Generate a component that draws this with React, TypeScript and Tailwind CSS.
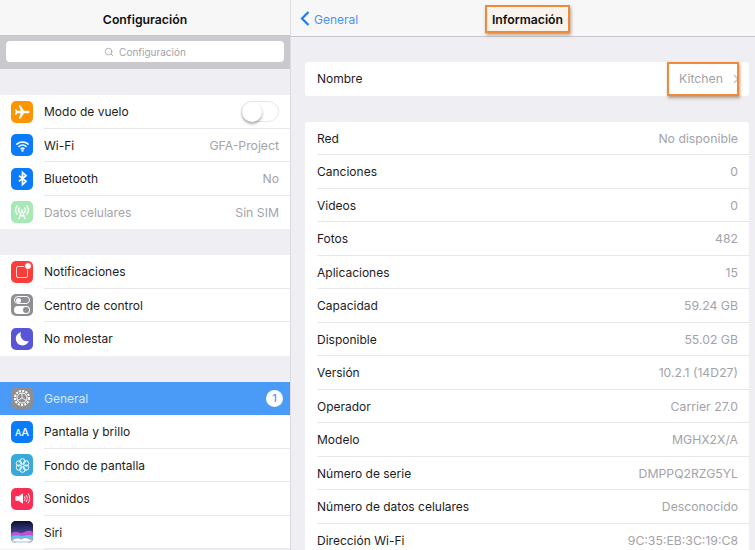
import type { ReactNode } from 'react'
import { Search } from 'lucide-react'

const font = { fontFamily: 'Inter, "Liberation Sans", sans-serif' }

function Tile({ bg, children }: { bg: string; children: ReactNode }) {
  return <div className={`flex h-[22px] w-[22px] shrink-0 items-center justify-center overflow-hidden rounded-[5px] ${bg}`}>{children}</div>
}

const Plane = () => (
  <svg viewBox="0 0 24 24" className="h-[18px] w-[18px]" fill="white">
    <path d="M22 12c0-1-1-1.600-2-1.600h-5.400L9.800 3H7.800l2.400 7.400H5.800L4 8H2.500l1 4-1 4H4l1.800-2.400h4.400L7.800 21h2l4.800-7.400H20c1 0 2-.6 2-1.600z" />
  </svg>
)
const Wifi = () => (
  <svg viewBox="0 0 24 24" className="h-[17px] w-[17px]" fill="none" stroke="white" strokeWidth="2.200" strokeLinecap="round">
    <path d="M4 10c4.600-4 11.400-4 16 0M7 13.300c3-2.500 7-2.500 10 0M10 16.400c1.200-.9 2.800-.9 4 0" />
    <circle cx="12" cy="19" r="0.6" fill="white" />
  </svg>
)
const Bluetooth = () => (
  <svg viewBox="0 0 24 24" className="h-[17px] w-[17px]" fill="none" stroke="white" strokeWidth="2.400">
    <path d="M7 8l10 8-5 4.500V3.500L17 8 7 16" />
  </svg>
)
const Antenna = () => (
  <svg viewBox="0 0 24 24" className="h-[18px] w-[18px]" fill="none" stroke="white" strokeWidth="1.800" strokeLinecap="round">
    <path d="M12 9L8 21M12 9l4 12M9.500 17h5M8.500 6.500a5 5 0 0 0 0 6M15.500 6.500a5 5 0 0 1 0 6M5.500 4a9 9 0 0 0 0 11M18.500 4a9 9 0 0 1 0 11" />
  </svg>
)
const Notif = () => (
  <div className="relative h-[22px] w-[22px]">
    <div className="absolute left-[5px] top-[5px] h-[12px] w-[12px] rounded-[2px] border-[1.500px] border-white/80" />
    <div className="absolute right-[1px] top-[1px] h-[8px] w-[8px] rounded-full border border-[#fc3d39] bg-white" />
  </div>
)
const Control = () => (
  <div className="flex flex-col gap-[2px]">
    <div className="flex h-[8px] w-[16px] items-center justify-start rounded-full border border-white pl-[1px]"><div className="h-[5px] w-[5px] rounded-full bg-white" /></div>
    <div className="flex h-[8px] w-[16px] items-center justify-end rounded-full bg-white pr-[1px]"><div className="h-[6px] w-[6px] rounded-full bg-[#8e8e93]" /></div>
  </div>
)
const Moon = () => (
  <svg viewBox="0 0 24 24" className="h-[17px] w-[17px]" fill="white">
    <path d="M10 3a9.500 9.500 0 1 0 11 12.500C14 17.500 7 11 10 3z" />
  </svg>
)
const Gear = () => (
  <svg viewBox="0 0 24 24" className="h-[20px] w-[20px]" fill="none" stroke="white">
    <circle cx="12" cy="12" r="8.500" strokeWidth="2.500" strokeDasharray="2.500 1.500" />
    <circle cx="12" cy="12" r="6" strokeWidth="1.200" />
    <path d="M12 6V12l5.200 3M12 12l-5.200 3" strokeWidth="1" />
  </svg>
)
const Flower = () => (
  <svg viewBox="0 0 24 24" className="h-[19px] w-[19px]" fill="none" stroke="white" strokeWidth="1.200">
    <circle cx="12" cy="6.800" r="3.400" />
    <circle cx="12" cy="17.200" r="3.400" />
    <circle cx="7.500" cy="9.400" r="3.400" />
    <circle cx="16.500" cy="9.400" r="3.400" />
    <circle cx="7.500" cy="14.600" r="3.400" />
    <circle cx="16.500" cy="14.600" r="3.400" />
  </svg>
)
const Speaker = () => (
  <svg viewBox="0 0 24 24" className="h-[17px] w-[17px]" fill="none" stroke="white" strokeWidth="1.300" strokeLinecap="round">
    <path d="M3 9.500h3.500L12 5.500v13l-5.500-4H3z" fill="white" />
    <path d="M15 9.500a4 4 0 0 1 0 5M17.500 7.500a7 7 0 0 1 0 9M20 5.500a10 10 0 0 1 0 13" />
  </svg>
)
const Siri = () => (
  <svg viewBox="0 0 22 22" className="h-[22px] w-[22px]">
    <defs>
      <linearGradient id="siri-bg" x1="0" y1="0" x2="0" y2="1">
        <stop offset="0" stopColor="#0d0f2b" />
        <stop offset="0.5" stopColor="#3a3f8f" />
        <stop offset="1" stopColor="#dff1fb" />
      </linearGradient>
    </defs>
    <rect width="22" height="22" fill="url(#siri-bg)" />
    <path d="M0 13c5-5 8 0 11-1s6-4 11-1v4H0z" fill="#c64fd0" />
    <path d="M0 16c4-3 8-1 11-1s7-2 11 0v2H0z" fill="#57c3f0" />
    <path d="M2 20c2-3 6-3 8-1 3-3 8-2 10 1z" fill="white" />
  </svg>
)

type SideRow = { icon: ReactNode; bg: string; label: string; value?: string; dim?: boolean; toggle?: boolean; active?: boolean; badge?: string }

const group1: SideRow[] = [
  { icon: <Plane />, bg: 'bg-[#fe9500]', label: 'Modo de vuelo', toggle: true },
  { icon: <Wifi />, bg: 'bg-[#0a7bfa]', label: 'Wi-Fi', value: 'GFA-Project' },
  { icon: <Bluetooth />, bg: 'bg-[#0a7bfa]', label: 'Bluetooth', value: 'No' },
  { icon: <Antenna />, bg: 'bg-[#a6e9b4]', label: 'Datos celulares', value: 'Sin SIM', dim: true },
]
const group2: SideRow[] = [
  { icon: <Notif />, bg: 'bg-[#fc3d39]', label: 'Notificaciones' },
  { icon: <Control />, bg: 'bg-[#8e8e93]', label: 'Centro de control' },
  { icon: <Moon />, bg: 'bg-[#5856d6]', label: 'No molestar' },
]
const group3: SideRow[] = [
  { icon: <Gear />, bg: 'bg-[#8e8e93]', label: 'General', active: true, badge: '1' },
  { icon: <span className="text-[11px] font-medium text-white"><span className="text-[9px]">A</span>A</span>, bg: 'bg-[#0a7bfa]', label: 'Pantalla y brillo' },
  { icon: <Flower />, bg: 'bg-[#36aadb]', label: 'Fondo de pantalla' },
  { icon: <Speaker />, bg: 'bg-[#fc2d55]', label: 'Sonidos' },
  { icon: <Siri />, bg: 'bg-black', label: 'Siri' },
]

const infoRows = [
  ['Red', 'No disponible'],
  ['Canciones', '0'],
  ['Videos', '0'],
  ['Fotos', '482'],
  ['Aplicaciones', '15'],
  ['Capacidad', '59.24 GB'],
  ['Disponible', '55.02 GB'],
  ['Versión', '10.2.1 (14D27)'],
  ['Operador', 'Carrier 27.0'],
  ['Modelo', 'MGHX2X/A'],
  ['Número de serie', 'DMPPQ2RZG5YL'],
  ['Número de datos celulares', 'Desconocido'],
  ['Dirección Wi-Fi', '9C:35:EB:3C:19:C8'],
]

function SideItem({ row, last }: { row: SideRow; last: boolean }) {
  return (
    <div className={`relative flex h-[33.5px] items-center pl-[11px] ${row.active ? 'bg-[#4a9bf7]' : 'bg-white'}`}>
      <Tile bg={row.bg}>{row.icon}</Tile>
      <span className={`ml-[11px] flex-1 pt-[1px] text-[12px] ${row.active ? 'text-[#d8e9fd]' : row.dim ? 'text-[#a3a3a8]' : 'text-[#1c1c1e]'}`}>{row.label}</span>
      {row.value && <span className="mr-[11px] pt-[1px] text-[12.250px] text-[#a3a3a8]">{row.value}</span>}
      {row.toggle && (
        <div className="mr-[11px] flex h-[21px] w-[38px] items-center rounded-full border border-[#e5e5ea] bg-white">
          <div className="h-[20px] w-[20px] rounded-full bg-white shadow-[0_2px_3px_rgba(0,0,0,0.35)]" />
        </div>
      )}
      {row.badge && (
        <div className="mr-[7px] flex h-[17px] w-[17px] items-center justify-center rounded-full bg-white text-[11px] font-medium text-[#4a9bf7]">{row.badge}</div>
      )}
      {!last && !row.active && <div className="absolute bottom-0 left-[44px] right-0 h-px bg-[#e8e8ec]" />}
    </div>
  )
}

function InfoRow({ label, value, last }: { label: string; value: string; last: boolean }) {
  return (
    <div className="relative flex h-[33.5px] items-center justify-between pl-[12px] pr-[11px] pt-[1px]">
      <span className="text-[12px] text-[#1c1c1e]">{label}</span>
      <span className="text-[12.250px] text-[#a3a3a8]">{value}</span>
      {!last && <div className="absolute bottom-0 left-[12px] right-0 h-px bg-[#e8e8ec]" />}
    </div>
  )
}

export default function App() {
  return (
    <div className="relative flex h-[550px] w-[755px] overflow-hidden bg-[#eeeef3]" style={font}>
      {/* panel izquierdo */}
      <div className="h-full w-[291px] shrink-0 border-r border-[#dcdce0]">
        <div className="flex h-[36px] items-center justify-center border-b border-[#c8c8cc] bg-[#f7f7f8] pt-[6px] text-[12.250px] font-semibold text-[#111]">Configuración</div>
        <div className="bg-[#c9c9ce] px-[6px] pb-[7px] pt-[5px]">
          <div className="flex h-[21px] items-center justify-center gap-[5px] rounded-[4px] bg-white pt-[1px] text-[10px] text-[#a3a3a8]">
            <Search className="h-[10px] w-[10px]" />
            Configuración
          </div>
        </div>
        <div className="h-[26px]" />
        {group1.map((r, i) => <SideItem key={r.label} row={r} last={i === group1.length - 1} />)}
        <div className="h-[26px]" />
        {group2.map((r, i) => <SideItem key={r.label} row={r} last={i === group2.length - 1} />)}
        <div className="h-[26px]" />
        {group3.map((r) => <SideItem key={r.label} row={r} last={false} />)}
      </div>

      {/* panel derecho */}
      <div className="flex-1">
        <div className="relative flex h-[37px] items-center border-b border-[#c8c8cc] bg-[#f7f7f8] pl-[9px]">
          <svg viewBox="0 0 10 15" className="h-[15px] w-[10px]" fill="none" stroke="#1f7cf0" strokeWidth="2.200">
            <path d="M8.500 1L2 7.500 8.500 14" />
          </svg>
          <span className="ml-[4px] pt-[4px] text-[12px] text-[#4a94ef]">General</span>
          <div className="absolute left-[194px] top-[5px] flex h-[28px] w-[85px] items-center justify-center border-2 border-[#ee8a3c] bg-[#f9f3ee] pt-[2px] text-[12.250px] font-semibold text-[#111] shadow-[1px_2px_3px_rgba(120,70,20,0.5)]">Información</div>
        </div>
        <div className="pl-[14px] pr-[6px]">
          <div className="mt-[25px] flex h-[33.5px] items-center justify-between rounded-[3px] bg-white pl-[12px] pr-[10px]">
            <span className="text-[12px] text-[#1c1c1e]">Nombre</span>
            <span className="flex items-center gap-[10px] text-[12.250px] text-[#a3a3a8]">
              Kitchen
              <svg viewBox="0 0 6 10" className="h-[10px] w-[6px]" fill="none" stroke="#c7c7cc" strokeWidth="1.500">
                <path d="M1 1l4 4-4 4" />
              </svg>
            </span>
          </div>
          <div className="mt-[26px] rounded-t-[3px] bg-white">
            {infoRows.map(([l, v], i) => <InfoRow key={l} label={l} value={v} last={i === infoRows.length - 1} />)}
          </div>
        </div>
      </div>

      {/* recuadro de la captura */}
      <div className="absolute left-[667px] top-[62px] h-[34px] w-[72px] border-2 border-[#ee8a3c] shadow-[1px_2px_3px_rgba(120,70,20,0.5)]" />
    </div>
  )
}
